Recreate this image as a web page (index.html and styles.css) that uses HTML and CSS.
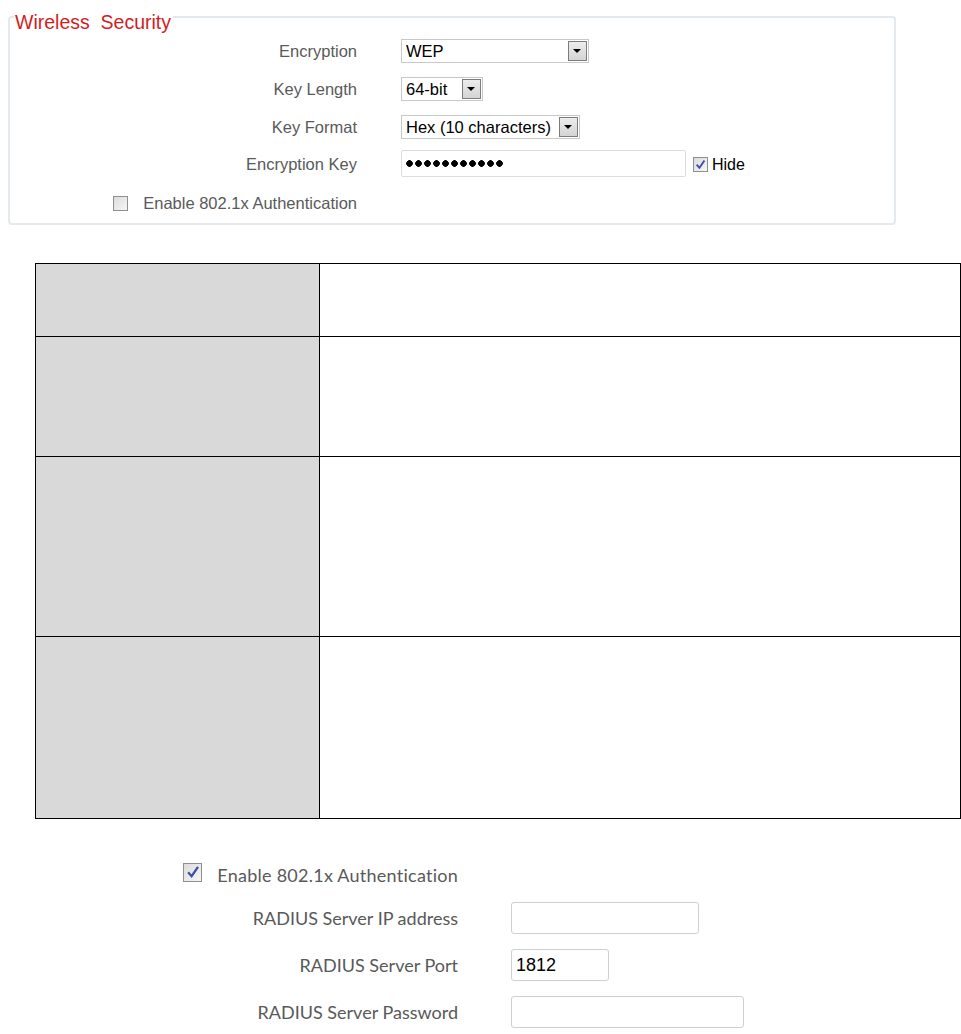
FILE: index.html
```html
<!DOCTYPE html>
<html lang="en">

<head>
  <meta charset="UTF-8">
  <title>Wireless Security</title>
  <link rel="stylesheet" href="styles.css">
</head>

<body>
  <fieldset class="security">
    <legend>Wireless&nbsp; Security</legend>

    <div class="form-grid">
      <label class="label">Encryption</label>
      <div class="field">
        <span class="select select-enc">WEP<span class="arrow"></span></span>
      </div>

      <label class="label">Key Length</label>
      <div class="field">
        <span class="select select-len">64-bit<span class="arrow"></span></span>
      </div>

      <label class="label">Key Format</label>
      <div class="field">
        <span class="select select-fmt">Hex (10 characters)<span class="arrow"></span></span>
      </div>

      <label class="label">Encryption Key</label>
      <div class="field">
        <span class="text-input key-input"><span class="dots"></span></span>
        <span class="check checked">
          <svg viewBox="0 0 10 10" width="11" height="11"><path d="M1.5 5.2 L4 8 L8.6 1.4" fill="none" stroke="#3b4fa8" stroke-width="1.7"/></svg>
        </span>
        <span class="hide-text">Hide</span>
      </div>

      <label class="label label-check">
        <span class="check"></span>
        Enable 802.1x Authentication
      </label>
      <div class="field"></div>
    </div>
  </fieldset>

  <div class="desc-table">
    <div class="key-cell"></div>
    <div class="val-cell"></div>
    <div class="key-cell"></div>
    <div class="val-cell"></div>
    <div class="key-cell"></div>
    <div class="val-cell"></div>
    <div class="key-cell"></div>
    <div class="val-cell"></div>
  </div>

  <div class="radius">
    <div class="radius-grid">
      <div class="r-label r-enable">
        <span class="check check-big">
          <svg viewBox="0 0 10 10" width="14" height="14"><path d="M1.5 5.2 L4 8 L8.6 1.4" fill="none" stroke="#3b4fa8" stroke-width="1.6"/></svg>
        </span>
        Enable 802.1x Authentication
      </div>
      <div></div>

      <div class="r-label">RADIUS Server IP address</div>
      <div><span class="r-input r-ip"></span></div>

      <div class="r-label">RADIUS Server Port</div>
      <div><span class="r-input r-port">1812</span></div>

      <div class="r-label">RADIUS Server Password</div>
      <div><span class="r-input r-pass"></span></div>
    </div>
  </div>
</body>

</html>
```

FILE: styles.css
```css
* {
  box-sizing: border-box;
}

html {
  overflow: hidden;
}

body {
  margin: 1px 0 0 8px;
  font-family: 'Liberation Sans', Arial, sans-serif;
  background: #fff;
  color: #000;
}

/* Wireless security box */

.security {
  width: 888px;
  margin: 0;
  padding: 0;
  border: 2px solid #e4e9ee;
  border-radius: 4px;
}

.security legend {
  margin-left: 4px;
  padding: 11px 2px 0 1px;
  font-size: 19.5px;
  line-height: 20px;
  color: #d21e1e;
}

.form-grid {
  display: grid;
  grid-template-columns: 347px 1fr;
  column-gap: 44px;
  grid-template-rows: 38px 38px 38px 37px 40px;
}

.label {
  display: flex;
  align-items: center;
  justify-content: flex-end;
  font-size: 16.5px;
  color: #5a5a5a;
}

.label-check .check {
  margin-right: 15px;
}

.field {
  display: flex;
  align-items: center;
}

.select {
  position: relative;
  display: inline-block;
  height: 24px;
  line-height: 22px;
  padding-left: 4px;
  border: 1px solid #c8c8c8;
  font-size: 16.5px;
  color: #000;
  background: #fff;
}

.select-enc {
  width: 188px;
}

.select-len {
  width: 82px;
}

.select-fmt {
  width: 179px;
}

.arrow {
  position: absolute;
  top: 1px;
  right: 1px;
  width: 19px;
  height: 20px;
  border: 1px solid #7c7c7c;
  background: linear-gradient(#ececec, #d4d4d4);
}

.arrow::after {
  content: '';
  position: absolute;
  left: 4px;
  top: 7px;
  border-left: 4px solid transparent;
  border-right: 4px solid transparent;
  border-top: 4px solid #000;
}

.text-input {
  display: inline-flex;
  align-items: center;
  border: 1px solid #dcdcdc;
  border-radius: 2px;
  background: #fff;
}

.key-input {
  width: 285px;
  height: 27px;
  padding-left: 3px;
  margin-top: -2px;
}

.dots {
  display: inline-block;
  width: 99px;
  height: 9px;
  background: radial-gradient(circle, #000 3px, transparent 3.6px) repeat-x;
  background-size: 9px 9px;
}

.check {
  display: inline-flex;
  align-items: center;
  justify-content: center;
  width: 15px;
  height: 15px;
  border: 1px solid #8f8f8f;
  background: linear-gradient(135deg, #dcdcdc, #f6f6f6);
}

.check.checked {
  margin-left: 7px;
}

.hide-text {
  margin-left: 4px;
  font-size: 16px;
  color: #000;
}

/* Description table */

.desc-table {
  display: grid;
  grid-template-columns: 284px 1fr;
  grid-template-rows: 73px 120px 180px 182px;
  width: 926px;
  margin: 38px 0 0 27px;
  border-top: 1px solid #000;
  border-left: 1px solid #000;
}

.key-cell,
.val-cell {
  border-right: 1px solid #000;
  border-bottom: 1px solid #000;
}

.key-cell {
  background: #d9d9d9;
}

/* RADIUS settings */

.radius {
  padding-top: 37px;
}

.radius-grid {
  display: grid;
  grid-template-columns: 450px 1fr;
  column-gap: 53px;
  grid-template-rows: 38px 47px 47px 47px;
}

.r-label {
  display: flex;
  align-items: center;
  justify-content: flex-end;
  font-family: 'Lato', 'Open Sans', sans-serif;
  font-size: 18px;
  color: #595959;
}

.r-enable {
  letter-spacing: 0.25px;
}

.check-big {
  width: 19px;
  height: 19px;
  margin-right: 15px;
  margin-top: -6px;
}

.radius-grid > div:not(.r-label) {
  display: flex;
  align-items: center;
}

.r-input {
  display: inline-block;
  height: 32px;
  border: 1px solid #cfcfcf;
  border-radius: 3px;
  font-size: 18px;
  line-height: 30px;
  padding-left: 4px;
  color: #000;
}

.r-ip {
  width: 188px;
}

.r-port {
  width: 98px;
}

.r-pass {
  width: 233px;
}
```
